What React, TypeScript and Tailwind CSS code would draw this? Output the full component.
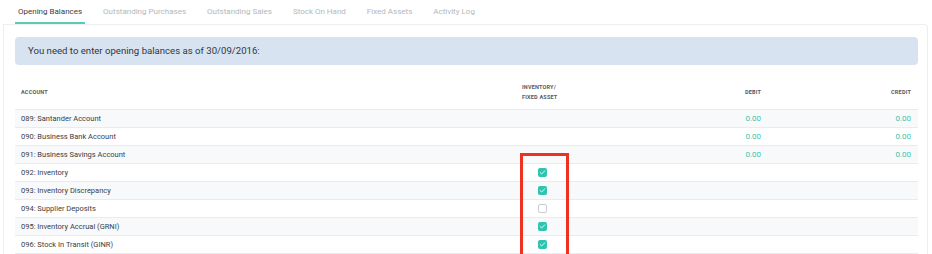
import { Check } from 'lucide-react'

export default function App() {
  const tabs = [
    "Opening Balances",
    "Outstanding Purchases",
    "Outstanding Sales",
    "Stock On Hand",
    "Fixed Assets",
    "Activity Log"
  ]

  const rows = [
    { name: "089: Santander Account", debit: "0.00", credit: "0.00" },
    { name: "090: Business Bank Account", debit: "0.00", credit: "0.00" },
    { name: "091: Business Savings Account", debit: "0.00", credit: "0.00" },
    { name: "092: Inventory", checked: true },
    { name: "093: Inventory Discrepancy", checked: true },
    { name: "094: Supplier Deposits", checked: false },
    { name: "095: Inventory Accrual (GRNI)", checked: true },
    { name: "096: Stock In Transit (GINR)", checked: true }
  ]

  return (
    <div className="relative w-[932px] h-[254px] overflow-hidden bg-white font-['Roboto',sans-serif] text-[#3a3d42]">
      {/* Tabs */}
      <div className="flex h-[24px] items-end gap-[15px] pl-[15px]">
        {tabs.map((tab, index) => (
          <div
            key={index}
            className={
              index === 0
                ? "border-b-2 border-[#5ec8b6] px-[3px] pb-[4px] text-[8px] leading-[12px] text-[#3a3d42]"
                : "border-b-2 border-transparent px-[3px] pb-[4px] text-[8px] leading-[12px] text-[#b3b7bd]"
            }
          >
            {tab}
          </div>
        ))}
      </div>

      {/* Card */}
      <div className="ml-[3px] w-[925px] rounded-tr-[4px] border border-b-0 border-[#eceef1] pt-[12px] pl-[11px] pr-[9px]">
        <div className="flex h-[28px] items-center rounded-[4px] bg-[#d7e3f1] pl-[13px] text-[9.6px] text-[#33363b]">
          You need to enter opening balances as of 30/09/2016:
        </div>

        <div className="mt-[10px]">
          {/* Header */}
          <div className="grid h-[35px] grid-cols-[505px_80px_167px_150px] items-center border-b border-[#e9ebef] text-[5.5px] font-bold leading-[10px] tracking-[0.2px] text-[#555a61]">
            <div className="pl-[6px]">ACCOUNT</div>
            <div className="pl-[2px]">
              INVENTORY/
              <br />
              FIXED ASSET
            </div>
            <div className="pr-[6px] text-right">DEBIT</div>
            <div className="pr-[6px] text-right">CREDIT</div>
          </div>

          {rows.map((row, index) => (
            <div
              key={index}
              className={
                index % 2 === 0
                  ? "grid h-[18px] grid-cols-[505px_80px_167px_150px] items-center border-b border-[#e9ebef] bg-[#f8f9fa] text-[7.5px]"
                  : "grid h-[18px] grid-cols-[505px_80px_167px_150px] items-center border-b border-[#e9ebef] bg-white text-[7.5px]"
              }
            >
              <div className="pl-[6px] text-[#3a3d42]">{row.name}</div>
              <div className="pl-[18px]">
                {row.checked === true && (
                  <div className="flex h-[9px] w-[9px] items-center justify-center rounded-[2px] bg-[#2ec4b2]">
                    <Check size={7} strokeWidth={3} className="text-white" />
                  </div>
                )}
                {row.checked === false && (
                  <div className="h-[9px] w-[9px] rounded-[2px] border border-[#c9ccd2] bg-white" />
                )}
              </div>
              <div className="pr-[6px] text-right text-[8px] text-[#3cc3b3]">{row.debit}</div>
              <div className="pr-[6px] text-right text-[8px] text-[#3cc3b3]">{row.credit}</div>
            </div>
          ))}
        </div>
      </div>

      {/* Annotation */}
      <div className="absolute left-[520px] top-[153px] h-[110px] w-[49px] border-[3px] border-[#ee3221]" />
    </div>
  )
}
